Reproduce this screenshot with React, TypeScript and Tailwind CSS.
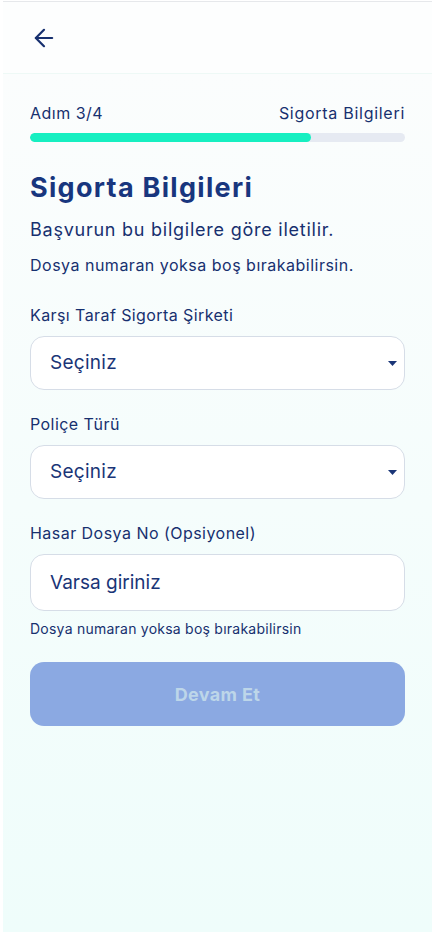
import { ArrowLeft } from "lucide-react";

function Caret() {
  return (
    <svg width="9" height="5" viewBox="0 0 9 5" className="shrink-0">
      <path d="M0 0h9L4.5 5z" fill="#1a3577" />
    </svg>
  );
}

function SelectBox({ value }: { value: string }) {
  return (
    <div className="mt-[11px] flex h-[54px] items-center justify-between rounded-[14px] border border-[#d6dde7] bg-white pl-[19px] pr-[7px]">
      <span className="text-[19px] leading-[24px] tracking-[0.015em] text-[#1a3577]">{value}</span>
      <Caret />
    </div>
  );
}

export default function App() {
  return (
    <div
      className="flex h-[934px] flex-col bg-white px-[3px] pb-[2px] pt-[1px]"
      style={{ fontFamily: "Inter, 'Noto Sans', sans-serif" }}
    >
      <div className="flex flex-1 flex-col border-t border-[#e6e8eb]">
        {/* Header */}
        <header className="flex h-[72px] items-center border-b border-[#eef9f6] bg-[#fdfefe] pl-[27px]">
          <ArrowLeft size={28} strokeWidth={1.9} color="#17306f" />
        </header>

        {/* Body */}
        <main className="flex flex-1 flex-col bg-gradient-to-b from-[#fbfdfd] to-[#effdfb] px-[27px] pt-[29px]">
          <div className="flex items-center justify-between text-[16px] leading-[20px] text-[#17306f]">
            <span className="tracking-[0.03em]">Adım 3/4</span>
            <span className="tracking-[0.045em]">Sigorta Bilgileri</span>
          </div>
          <div className="mt-[10px] h-[9px] w-full overflow-hidden rounded-full bg-[#e6eaf2]">
            <div className="h-full rounded-full bg-[#17efc1]" style={{ width: "75%" }} />
          </div>

          <h1 className="mt-[30px] text-[27px] font-bold leading-[32px] tracking-[0.048em] text-[#18367e]">Sigorta Bilgileri</h1>
          <p className="mt-[13.5px] text-[18px] leading-[24px] tracking-[0.042em] text-[#17306f]">Başvurun bu bilgilere göre iletilir.</p>
          <p className="mt-[13px] text-[16px] leading-[20px] tracking-[0.031em] text-[#17306f]">Dosya numaran yoksa boş bırakabilirsin.</p>

          <label className="mt-[30.5px] text-[16px] leading-[20px] tracking-[0.026em] text-[#17306f]">Karşı Taraf Sigorta Şirketi</label>
          <SelectBox value="Seçiniz" />

          <label className="mt-[24px] text-[16px] leading-[20px] tracking-[0.028em] text-[#17306f]">Poliçe Türü</label>
          <SelectBox value="Seçiniz" />

          <label className="mt-[23.5px] text-[16px] leading-[20px] tracking-[0.029em] text-[#17306f]">Hasar Dosya No (Opsiyonel)</label>
          <div className="mt-[11.5px] flex h-[57px] items-center rounded-[14px] border border-[#d6dde7] bg-white px-[19px]">
            <span className="text-[19px] leading-[24px] text-[#1a3577]">Varsa giriniz</span>
          </div>
          <p className="mt-[8.5px] text-[14px] leading-[18px] tracking-[0.017em] text-[#17306f]">Dosya numaran yoksa boş bırakabilirsin</p>

          <button className="mt-[24.5px] h-[64px] w-full rounded-[14px] bg-[#8ba9e2] text-[18px] font-bold tracking-[0.02em] text-[#bdd6e9]">
            Devam Et
          </button>
        </main>
      </div>
    </div>
  );
}
